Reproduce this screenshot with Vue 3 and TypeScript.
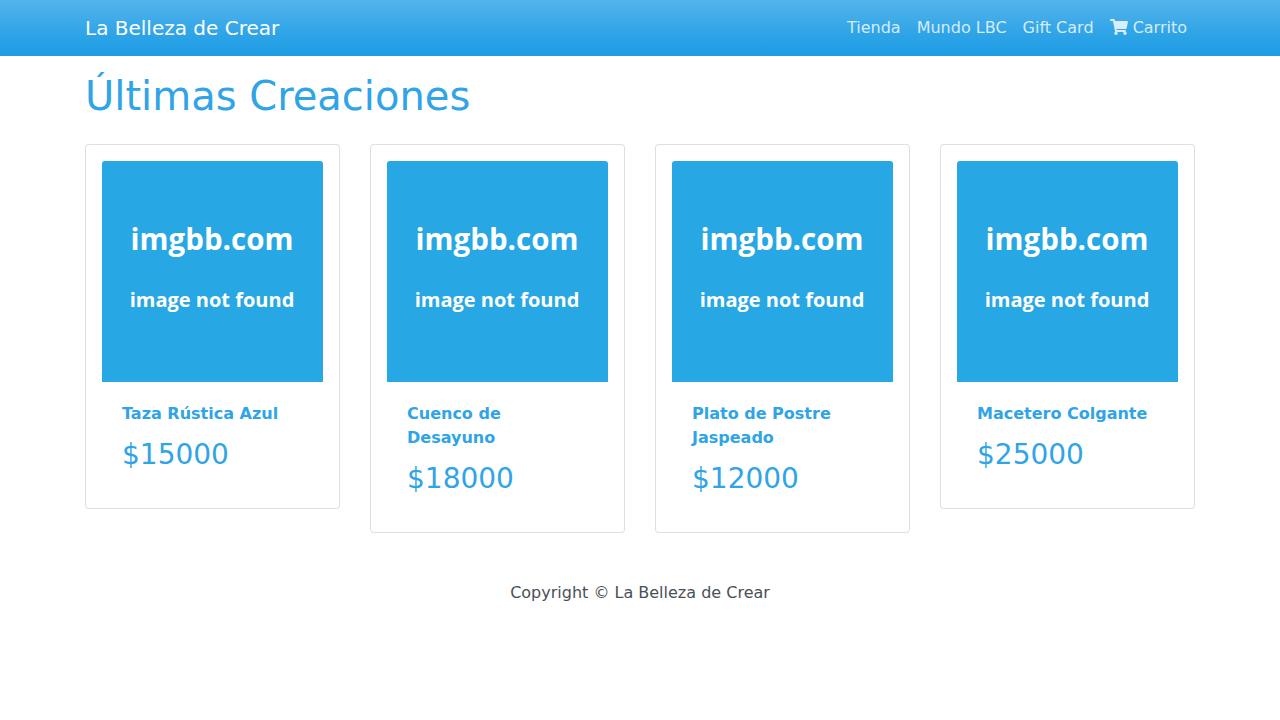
<script setup lang="ts">
interface NavLink {
  label: string
  cart?: boolean
}

interface Product {
  name: string
  price: number
}

const links: NavLink[] = [
  { label: 'Tienda' },
  { label: 'Mundo LBC' },
  { label: 'Gift Card' },
  { label: 'Carrito', cart: true },
]

const products: Product[] = [
  { name: 'Taza Rústica Azul', price: 15000 },
  { name: 'Cuenco de Desayuno', price: 18000 },
  { name: 'Plato de Postre Jaspeado', price: 12000 },
  { name: 'Macetero Colgante', price: 25000 },
]
</script>

<template>
  <div class="page">
    <header class="navbar">
      <nav class="container navbar-inner">
        <a class="brand" href="#">La Belleza de Crear</a>
        <ul class="nav-links">
          <li v-for="link in links" :key="link.label">
            <a class="nav-link" href="#">
              <svg v-if="link.cart" class="cart-icon" viewBox="0 0 576 512" aria-hidden="true">
                <path
                  fill="currentColor"
                  d="M528.12 301.319l47.273-208C578.806 78.301 567.391 64 551.99 64H159.208l-9.166-44.81C147.758 8.021 137.93 0 126.529 0H24C10.745 0 0 10.745 0 24v16c0 13.255 10.745 24 24 24h69.883l70.248 343.435C147.325 417.1 136 435.222 136 456c0 30.928 25.072 56 56 56s56-25.072 56-56c0-15.674-6.447-29.835-16.824-40h209.647C430.447 426.165 424 440.326 424 456c0 30.928 25.072 56 56 56s56-25.072 56-56c0-22.172-12.888-41.332-31.579-50.405l5.517-24.276c3.413-15.018-8.002-29.319-23.403-29.319H218.117l-6.545-32h293.145c11.206 0 20.92-7.754 23.403-18.681z"
                />
              </svg>
              {{ link.label }}
            </a>
          </li>
        </ul>
      </nav>
    </header>

    <main class="container">
      <h1 class="title">Últimas Creaciones</h1>
      <section class="products">
        <article v-for="product in products" :key="product.name" class="card">
          <svg class="card-image" viewBox="0 0 442 442">
            <rect width="442" height="442" fill="#27a7e3" />
            <text class="image-host" x="220" y="178">imgbb.com</text>
            <text class="image-note" x="220" y="292">image not found</text>
          </svg>
          <div class="card-body">
            <h2 class="card-name"><a href="#">{{ product.name }}</a></h2>
            <p class="card-price">${{ product.price }}</p>
          </div>
        </article>
      </section>
    </main>

    <footer class="container footer">Copyright © La Belleza de Crear</footer>
  </div>
</template>

<style>
body {
  margin: 0;
  background: #fff;
}
</style>

<style scoped>
.page {
  font-family: "DejaVu Sans", sans-serif;
  font-size: 16px;
  line-height: 24px;
  color: #495057;
}

.page * {
  box-sizing: border-box;
}

.container {
  width: 100%;
  max-width: 1140px;
  margin: 0 auto;
  padding: 0 15px;
}

.navbar {
  background: linear-gradient(#54b4eb, #2fa4e7 60%, #1d9ce5);
}

.navbar-inner {
  display: flex;
  flex-wrap: wrap;
  align-items: center;
  justify-content: space-between;
  min-height: 56px;
}

.brand {
  font-size: 20px;
  line-height: 30px;
  color: #fff;
  text-decoration: none;
}

.nav-links {
  display: flex;
  flex-wrap: wrap;
  margin: 0;
  padding: 0;
  list-style: none;
}

.nav-link {
  display: block;
  padding: 8px;
  color: rgba(255, 255, 255, 0.8);
  text-decoration: none;
}

.cart-icon {
  width: 18px;
  height: 16px;
  vertical-align: -2px;
}

.title {
  margin: 16px 0 24px;
  font-size: 40px;
  font-weight: 400;
  line-height: 48px;
  color: #2fa4e7;
}

.products {
  display: grid;
  grid-template-columns: repeat(auto-fit, minmax(220px, 1fr));
  align-items: start;
  gap: 30px;
}

.card {
  padding: 16px;
  border: 1px solid rgba(0, 0, 0, 0.125);
  border-radius: 4px;
  background: #fff;
}

.card-image {
  display: block;
  width: 100%;
  border-radius: 3px 3px 0 0;
}

.image-host,
.image-note {
  font-family: "Open Sans", sans-serif;
  font-weight: 700;
  fill: #fff;
  text-anchor: middle;
}

.image-host {
  font-size: 59px;
}

.image-note {
  font-size: 40px;
}

.card-body {
  padding: 20px;
  color: #2fa4e7;
}

.card-name {
  margin: 0 0 12px;
  font-size: 16px;
  font-weight: 700;
  line-height: 24px;
}

.card-name a {
  color: inherit;
  text-decoration: none;
}

.card-price {
  margin: 0;
  font-size: 28px;
  line-height: 34px;
}

.footer {
  margin-top: 48px;
  text-align: center;
}
</style>
